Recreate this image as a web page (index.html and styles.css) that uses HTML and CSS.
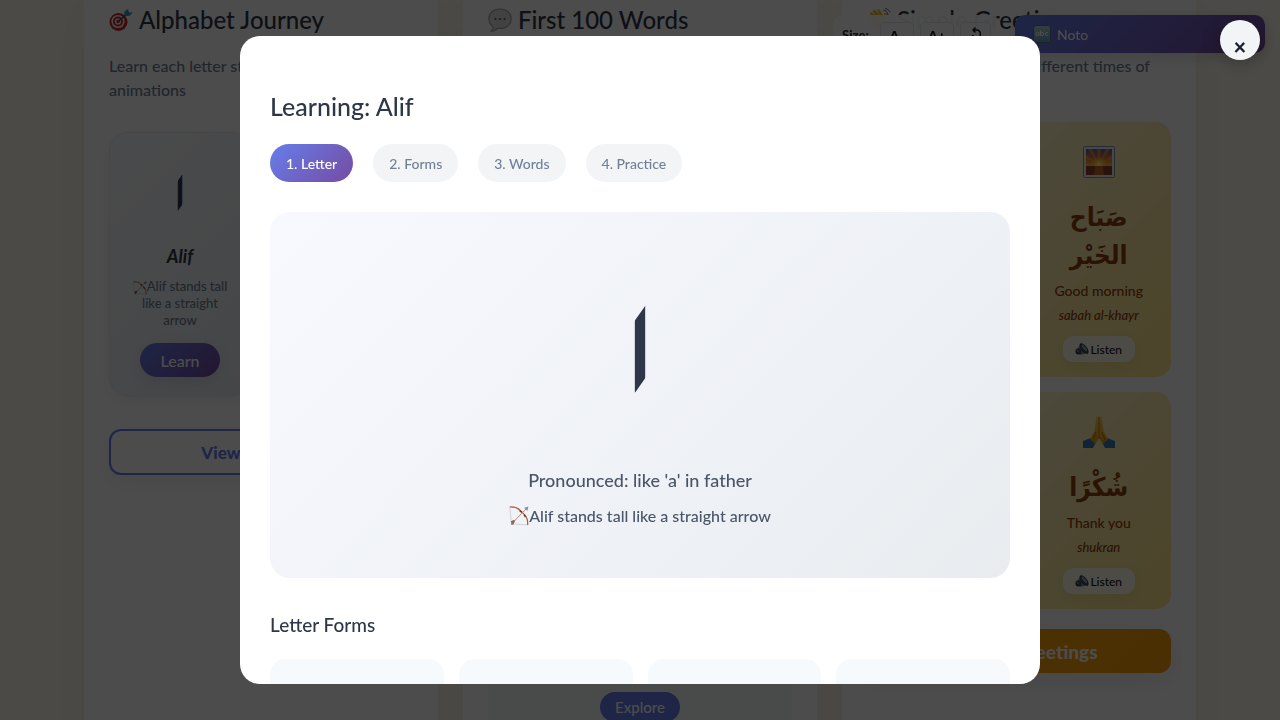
FILE: index.html
```html
<!DOCTYPE html>
<html lang="en">
<head>
<meta charset="utf-8">
<title>Learning: Alif</title>
<link rel="stylesheet" href="styles.css">
</head>
<body>
<svg class="defs" aria-hidden="true">
  <defs>
    <linearGradient id="sky" x1="0" y1="0" x2="0" y2="1"><stop offset="0" stop-color="#5d5aa8"/><stop offset=".35" stop-color="#d9763c"/><stop offset=".62" stop-color="#ffb52e"/></linearGradient>
    <radialGradient id="sun"><stop offset="0" stop-color="#fffbb0"/><stop offset=".4" stop-color="#ffd83a"/><stop offset="1" stop-color="#ff9d1e" stop-opacity="0"/></radialGradient>
    <linearGradient id="hand" x1="0" y1="0" x2="0" y2="1"><stop offset="0" stop-color="#ffd54a"/><stop offset="1" stop-color="#e89a10"/></linearGradient>
    <linearGradient id="abc" x1="0" y1="0" x2="0" y2="1"><stop offset="0" stop-color="#b5cfd8"/><stop offset="1" stop-color="#5f9fc0"/></linearGradient>
    <symbol id="bow" viewBox="0 0 20 20">
      <path d="M.8 1 2.4 17.8 18.7 19" fill="none" stroke="#b9bcc4" stroke-width=".6"/>
      <path d="M.8 1C5 .8 9.400 1.800 12 5.500c1.600 1.200 2.700 2 3.700 3.600 2.400 2.600 3.300 6 3 9.900" fill="none" stroke="#a65a3c" stroke-width="1.200"/>
      <path d="m10.800 4.600 2.200 1.800m2.200 2.300 1.400 2.200" stroke="#70392b" stroke-width="1.600"/>
      <path d="M3.600 16.800 17 3" stroke="#b58e74" stroke-width="1"/>
      <path d="m15.200 1.700 4.300-1.200-1 4.300-1.700-1Z" fill="#8298a8"/>
      <path d="m2 15.200 3-1.500 1 1.200-1.600 3.600-2 .6Z" fill="#96645a"/>
    </symbol>
    <symbol id="speaker" viewBox="0 0 14 14">
      <path d="M2 7 7 1l6 10-8 2Z" fill="#7f8b98"/>
      <ellipse cx="9" cy="6.500" rx="3" ry="6.300" transform="rotate(-38 9 6.500)" fill="#34404c"/>
      <ellipse cx="9.400" cy="6" rx="1.400" ry="4.200" transform="rotate(-38 9.400 6)" fill="#9aa8b4"/>
      <circle cx="3.400" cy="9.600" r="3" fill="#36424e"/>
      <circle cx="3" cy="9" r="1" fill="#8593a0"/>
    </symbol>
  </defs>
</svg>

<main class="page">
  <section class="panel">
    <h2 class="panel-title">
      <svg class="title-icon" viewBox="0 0 24 24" aria-hidden="true"><circle cx="9.500" cy="14" r="9" fill="#c8252b"/><circle cx="9" cy="13.500" r="6.600" fill="#eee"/><circle cx="9" cy="13.500" r="5" fill="#d5262d"/><circle cx="9" cy="13.500" r="3.100" fill="#eee"/><circle cx="9" cy="13.500" r="1.700" fill="#d5262d"/><path d="M9 13.500 18 6" stroke="#32464f" stroke-width="1.400"/><path d="m15 7 .5-3.500L19 1l.8 3.300 4 .4-3.200 3-4 .5Z" fill="#2f9dac"/></svg>
      Alphabet Journey</h2>
    <p class="panel-text">Learn each letter step by step with fun animations</p>
    <div class="letter-grid">
      <article class="letter-card">
        <div class="letter-glyph" lang="ar"><span class="cut-glyph">ا</span></div>
        <h3 class="letter-name">Alif</h3>
        <p class="letter-text"><svg class="bow-small" aria-hidden="true"><use href="#bow"/></svg>Alif stands tall like a straight arrow</p>
        <button class="learn-button" type="button">Learn</button>
      </article>
    </div>
    <button class="outline-button" type="button">View All Letters</button>
  </section>

  <section class="panel">
    <h2 class="panel-title">
      <svg class="title-icon" viewBox="0 0 24 24" aria-hidden="true"><path d="M12 1C5.500 1 .8 5 .8 10.700c0 3.600 1.700 6.300 4.600 8-.2 1.800-1 3.200-2.400 4.500 3 0 5-1.200 6.600-3 .8.200 1.600.2 2.400.2 6.500 0 11.200-4 11.200-9.700S18.500 1 12 1Z" fill="#ddd" stroke="#a8a8a8" stroke-width="1.200"/><g fill="#444"><circle cx="7.500" cy="11" r="1"/><circle cx="12" cy="11" r="1"/><circle cx="16.500" cy="11" r="1"/></g></svg>
      First 100 Words</h2>
    <div class="word-card"><button class="explore-button" type="button">Explore</button></div>
  </section>

  <section class="panel">
    <h2 class="panel-title">
      <svg class="title-icon" viewBox="0 0 24 24" aria-hidden="true"><path d="M5 9 2.500 5.500l2-1.500L9 8 5.500 3l2-1.600L13 7l-3-5 2-1 5 8 .5-4 2.500.5V15l-4 7-7-1L1 10l1.500-1.500Z" fill="#f2b52b"/><path d="M16 2c3 .5 4.500 2 5 5M18 .5c3 .5 4.500 2 5 4" fill="none" stroke="#777" stroke-width="1"/></svg>
      Simple Greetings</h2>
    <p class="panel-text">Common greetings for different times of day</p>
    <div class="greeting-grid">
      <article class="greeting-card"></article>
      <article class="greeting-card">
        <svg class="greeting-icon" viewBox="0 0 32 32" aria-hidden="true"><rect x=".5" y=".5" width="31" height="31" rx="1" fill="#e8edf0" stroke="#82939b"/><path d="M3 3h26v26H3z" fill="url(#sky)"/><path d="M16 19 5 3h4Zm0 0L14 3h4Zm0 0L23 3h4ZM16 19 3 9v4Zm0 0L29 9v4Z" fill="#ff9d33" opacity=".6"/><circle cx="16" cy="19" r="9" fill="url(#sun)"/><path d="M3 20h26v9H3z" fill="#8c3c2d"/><path d="M12 20h8l1 9H11Z" fill="#d97925" opacity=".7"/></svg>
        <p class="greeting-arabic" lang="ar" dir="rtl">صَبَاح الخَيْر</p>
        <p class="greeting-meaning">Good morning</p>
        <p class="greeting-sound">sabah al-khayr</p>
        <button class="listen-button" type="button"><svg class="speaker" aria-hidden="true"><use href="#speaker"/></svg>Listen</button>
      </article>
      <article class="greeting-card"></article>
      <article class="greeting-card">
        <svg class="greeting-icon" viewBox="0 0 32 32" aria-hidden="true"><path d="m0 25 8-3 5 4-3 6H0Zm32 0-8-3-5 4 3 6h10Z" fill="#3678bd"/><path d="M15.800 1.500c-.6-1.800-2.300-1.500-2.500.2L11.500 15 7 23.500c2 1 4 3 5 5l3.800-6Zm.4 0c.6-1.800 2.300-1.500 2.500.2L20.500 15l4.500 8.500c-2 1-4 3-5 5l-3.800-6Z" fill="url(#hand)"/><path d="M16 1v22M13 16l-3 8m9-8 3 8" stroke="#a76b0d" fill="none" stroke-width=".8"/></svg>
        <p class="greeting-arabic" lang="ar" dir="rtl">شُكْرًا</p>
        <p class="greeting-meaning">Thank you</p>
        <p class="greeting-sound">shukran</p>
        <button class="listen-button" type="button"><svg class="speaker" aria-hidden="true"><use href="#speaker"/></svg>Listen</button>
      </article>
    </div>
    <button class="greetings-button" type="button">View All Greetings</button>
  </section>
</main>

<div class="toolbar">
  <div class="size-tools">
    <span class="size-label">Size:</span>
    <button class="size-button" type="button">A-</button>
    <button class="size-button" type="button">A+</button>
    <button class="size-button size-reset" type="button" aria-label="Reset size"><svg class="reset-icon" viewBox="0 0 12 14" aria-hidden="true"><path d="M3 3h3.500a4 4 0 1 1-4 5M5.500.5 3 3l2.500 2.500" fill="none" stroke="#111827" stroke-width="1.500"/></svg></button>
  </div>
  <button class="font-button" type="button">
    <svg class="abc-icon" viewBox="0 0 18 18" aria-hidden="true"><rect x=".5" y=".5" width="17" height="17" rx="2.500" fill="url(#abc)" stroke="#507a86"/><path d="M5.800 7.200v3.600M5.800 9a1.500 1.700 0 1 0-3 0 1.500 1.700 0 0 0 3 0M7.500 5.200v5.600M7.500 9a1.500 1.700 0 1 0 3 0 1.500 1.700 0 0 0-3 0M15 7.900a1.600 1.700 0 1 0 0 2.300" fill="none" stroke="#fff" stroke-width="1"/></svg>
    Noto</button>
</div>

<div class="overlay">
  <button class="close-button" type="button" aria-label="Close">×</button>
  <div class="modal" role="dialog" aria-modal="true" aria-labelledby="modal-title">
    <h2 class="modal-title" id="modal-title">Learning: Alif</h2>
    <div class="steps">
      <button class="step step-active" type="button">1. Letter</button>
      <button class="step" type="button">2. Forms</button>
      <button class="step" type="button">3. Words</button>
      <button class="step" type="button">4. Practice</button>
    </div>
    <div class="preview">
      <div class="preview-glyph" lang="ar"><span class="cut-glyph">ا</span></div>
      <p class="preview-sound">Pronounced: like 'a' in father</p>
      <p class="preview-text"><svg class="bow-large" aria-hidden="true"><use href="#bow"/></svg>Alif stands tall like a straight arrow</p>
    </div>
    <h3 class="forms-title">Letter Forms</h3>
    <div class="forms">
      <div class="form-tile"></div>
      <div class="form-tile"></div>
      <div class="form-tile"></div>
      <div class="form-tile"></div>
    </div>
  </div>
</div>
</body>
</html>
```
FILE: styles.css
```css
* { box-sizing: border-box; margin: 0; padding: 0; }
body {
  height: 100vh;
  overflow: hidden;
  background: #fef8ea;
  color: #2d3748;
  font-family: Lato, "DejaVu Sans", sans-serif;
  font-size: 16px;
}
button { border: 0; font: inherit; cursor: pointer; }
svg { display: inline-block; flex: none; }
.defs { position: absolute; width: 0; height: 0; }

.page {
  display: grid;
  grid-template-columns: repeat(3, 1fr);
  gap: 25px;
  max-width: 1112px;
  margin: 0 auto;
}
.panel {
  min-height: 100vh;
  padding: 4px 25px 25px;
  background: #fff;
  box-shadow: 0 10px 40px rgba(80, 40, 40, 0.05);
}
.panel-title {
  display: flex;
  align-items: center;
  gap: 6px;
  margin-bottom: 18px;
  font-size: 24px;
  font-weight: 500;
  line-height: 32px;
  white-space: nowrap;
}
.title-icon { width: 24px; height: 24px; }
.panel-text { color: #718096; font-weight: 500; line-height: 24px; min-height: 48px; }

/* Slanted pen cuts at both ends of the letter's stroke */
.cut-glyph {
  display: inline-block;
  clip-path: polygon(0 46%, 30% 35%, 70% 26%, 100% 20%, 100% 50%, 70% 62%, 30% 71%, 0 80%);
}

.letter-grid { display: grid; grid-template-columns: 1fr 1fr; gap: 20px; margin-top: 30px; }
.letter-card {
  padding: 19px;
  border: 1px solid #e5e9ee;
  border-radius: 20px;
  background: linear-gradient(135deg, #f7fafc, #e8ebf0);
  box-shadow: 0 4px 15px rgba(0, 0, 0, 0.06);
  text-align: center;
}
.letter-glyph { font: 48px/84px "DejaVu Sans", sans-serif; color: #2d3748; }
.letter-name { font-size: 18px; font-style: italic; line-height: 24px; margin: 8px 0 10px; }
.letter-text { color: #718096; font-size: 13px; font-weight: 500; line-height: 17px; }
.bow-small { width: 14px; height: 14px; vertical-align: middle; }
.learn-button {
  width: 80px;
  height: 34px;
  margin-top: 14px;
  border-radius: 20px;
  color: #fff;
  background: linear-gradient(135deg, #667eea, #764ba2);
  box-shadow: 0 4px 15px rgba(0, 0, 0, 0.1);
  font-weight: 500;
}
.outline-button {
  width: 100%;
  height: 46px;
  margin-top: 32px;
  border: 2px solid #667eea;
  border-radius: 12px;
  color: #667eea;
  background: #fff;
  box-shadow: 0 8px 24px rgba(0, 0, 0, 0.06);
  font-size: 17px;
  font-weight: 900;
}

.word-card {
  margin-top: 120px;
  padding: 518px 0 20px;
  border-radius: 20px;
  background: #f5faf7;
  text-align: center;
}
.explore-button {
  width: 80px;
  height: 30px;
  border-radius: 15px;
  color: #fff;
  background: #667eea;
  font-size: 15px;
  font-weight: 500;
}
.panel .word-card { margin-top: 138px; }

.greeting-grid { display: grid; grid-template-columns: 1fr 1fr; gap: 15px; margin-top: 20px; }
.greeting-card {
  display: flex;
  flex-direction: column;
  align-items: center;
  padding: 24px 15px 15px;
  border-radius: 15px;
  color: #92400e;
  background: linear-gradient(135deg, #fef3c7, #fde68a);
  text-align: center;
}
.greeting-icon { width: 32px; height: 32px; margin-bottom: 20px; }
.greeting-arabic {
  width: 80px;
  margin-bottom: 6px;
  font: 700 26px/38px "DejaVu Sans Condensed", "DejaVu Sans", sans-serif;
}
.greeting-meaning { font-size: 14px; font-weight: 500; line-height: 22px; }
.greeting-sound { margin: 2px 0 10px; font-size: 13px; font-style: italic; font-weight: 500; line-height: 22px; }
.listen-button {
  display: flex;
  align-items: center;
  justify-content: center;
  width: 72px;
  height: 26px;
  border-radius: 10px;
  color: #111827;
  background: #fffc;
  box-shadow: 0 4px 15px rgba(0, 0, 0, 0.06);
  font-size: 12px;
  font-weight: 500;
}
.speaker { width: 14px; height: 14px; margin-right: 1px; }
.greetings-button {
  width: 100%;
  height: 44px;
  margin-top: 20px;
  border-radius: 12px;
  color: #fff;
  background: linear-gradient(135deg, #ffa500, #f59e0b);
  box-shadow: 0 8px 24px rgba(0, 0, 0, 0.08);
  font-size: 19px;
  font-weight: 900;
}

.toolbar {
  position: fixed;
  top: 15px;
  right: 15px;
  display: flex;
  gap: 15px;
}
.size-tools {
  display: flex;
  align-items: center;
  gap: 6px;
  height: 40px;
  padding: 0 9px;
  border-radius: 10px;
  background: #fffffff2;
}
.size-label { width: 32px; font-size: 13px; font-weight: 900; }
.size-button {
  width: 34px;
  height: 26px;
  border: 1px solid #e2e8f0;
  border-radius: 5px;
  background: #fff;
  color: #111827;
  font-size: 14px;
  font-weight: 900;
}
.size-reset { width: 31px; }
.reset-icon { width: 12px; height: 14px; }
.font-button {
  display: flex;
  align-items: center;
  gap: 6px;
  width: 250px;
  height: 38px;
  padding: 0 18px;
  border-radius: 10px;
  color: #fff;
  background: linear-gradient(135deg, #667eea, #764ba2);
  box-shadow: 0 4px 15px rgba(0, 0, 0, 0.15);
  font-size: 14px;
  font-weight: 500;
}
.abc-icon { width: 18px; height: 18px; }

.overlay {
  position: fixed;
  inset: 0;
  display: flex;
  align-items: center;
  justify-content: center;
  background: rgba(0, 0, 0, 0.7);
}
.close-button {
  position: absolute;
  top: 20px;
  right: 20px;
  width: 40px;
  height: 40px;
  padding-top: 14px;
  border-radius: 50%;
  color: #1a202c;
  background: #f3f4f6;
  box-shadow: 0 4px 20px rgba(0, 0, 0, 0.2);
  font-size: 22px;
  font-weight: 900;
  line-height: 24px;
}
.modal {
  width: 90%;
  max-width: 800px;
  height: 90vh;
  padding: 54px 30px 30px;
  overflow: hidden;
  border-radius: 20px;
  background: #fff;
}
.modal-title { font-size: 25px; font-weight: 500; line-height: 32px; margin-bottom: 22px; }
.steps { display: flex; gap: 20px; margin-bottom: 30px; }
.step {
  height: 38px;
  padding: 0 16px;
  border-radius: 20px;
  color: #718096;
  background: #f3f4f6;
  font-size: 14px;
  font-weight: 500;
}
.step-active { color: #fff; background: linear-gradient(135deg, #667eea, #764ba2); }
.preview {
  padding: 40px 40px 50px;
  border-radius: 20px;
  color: #4a5568;
  background: linear-gradient(135deg, #f8f9ff, #e8ecef);
  text-align: center;
}
.preview-glyph { color: #2d3748; font: 115px/201px "DejaVu Sans", sans-serif; margin-bottom: 13px; }
.preview-sound { font-size: 18px; font-weight: 500; line-height: 28px; }
.preview-text {
  display: flex;
  align-items: center;
  justify-content: center;
  margin-top: 10px;
  font-weight: 500;
  line-height: 24px;
}
.bow-large { width: 20px; height: 20px; }
.forms-title { margin: 33px 0 20px; font-size: 19px; font-weight: 500; line-height: 28px; }
.forms { display: grid; grid-template-columns: repeat(4, 1fr); gap: 15px; }
.form-tile { height: 140px; border-radius: 15px; background: #f7fafc; }
```
